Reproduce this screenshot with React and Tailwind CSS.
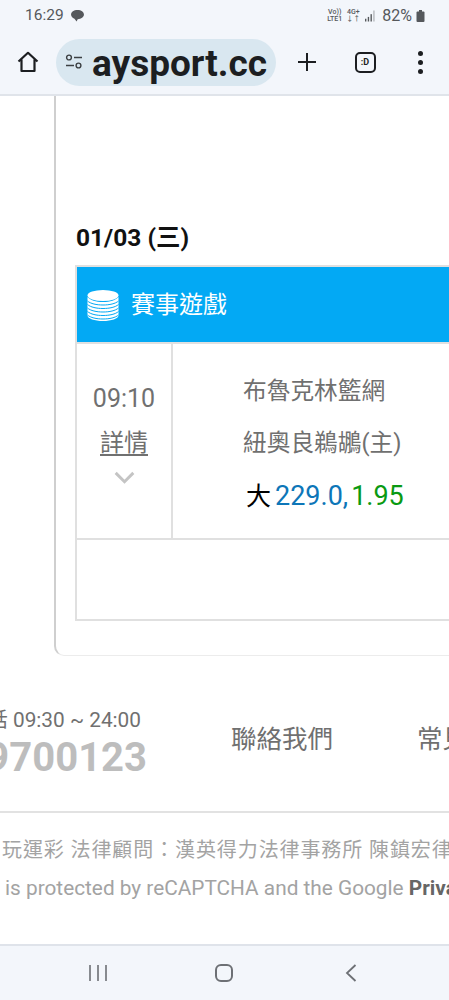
const CJK = { fontFamily: 'Roboto, "Noto Sans CJK TC", sans-serif' }

function HomeIcon() {
  return (
    <svg viewBox="0 0 24 24" fill="none" stroke="#1c1e21" strokeWidth="2.2" strokeLinejoin="round" className="w-[24px] h-[24px]">
      <path d="M2.5 11.5 12 2.8l9.5 8.7M5.5 9.5V21h13V9.500" />
    </svg>
  )
}

function TuneIcon() {
  return (
    <svg viewBox="0 0 18 16" fill="none" stroke="#3c4043" strokeWidth="1.4" className="w-[18px] h-[16px]">
      <circle cx="4" cy="3.5" r="2.4" />
      <path d="M9 3.5h8M1 11.5h8" />
      <circle cx="13.5" cy="11.5" r="2.4" />
    </svg>
  )
}

function CoinsIcon() {
  return (
    <svg viewBox="0 0 32 32" className="w-[32px] h-[32px]">
      <ellipse cx="16" cy="6.5" rx="15.5" ry="5.5" fill="#fff" />
      <path d="M.5 8v18.5C.5 29.5 7.5 32 16 32s15.500-2.500 15.500-5.500V8C29 11 23 13 16 13S3 11 .5 8z" fill="#fff" />
      <g fill="none" stroke="#03a9f4" strokeWidth="1">
        <path d="M.5 12c3 2.700 9 4 15.500 4s12.500-1.300 15.500-4" />
        <path d="M.5 15.500c3 2.700 9 4 15.500 4s12.500-1.300 15.500-4" />
        <path d="M.5 19c3 2.700 9 4 15.500 4s12.500-1.300 15.500-4" />
        <path d="M.5 22.500c3 2.700 9 4 15.500 4s12.500-1.300 15.500-4" />
        <path d="M.5 26c3 2.700 9 4 15.500 4s12.500-1.300 15.500-4" />
      </g>
    </svg>
  )
}

function StatusBar() {
  return (
    <div className="h-[30px] flex items-center pl-[25px] pr-[24px] pt-[1px] text-[#55585c]">
      <span className="text-[15.5px]">16:29</span>
      <svg viewBox="0 0 14 13" className="w-[13px] h-[12px] ml-[7px]" fill="#55585c">
        <path d="M7 0C3 0 0 2.200 0 5c0 2 1.500 3.600 3.700 4.400L6 12.500l1.200-2.500C11 10 14 7.800 14 5S11 0 7 0z" />
      </svg>
      <div className="ml-auto flex items-center">
        <div className="text-[7px] leading-[7px] font-medium text-center">
          <div>Vo))</div>
          <div>LTE1</div>
        </div>
        <div className="text-[7px] leading-[7px] font-medium text-center ml-[4px]">
          <div>4G+</div>
          <div>↓↑</div>
        </div>
        <svg viewBox="0 0 12 12" className="w-[11px] h-[12px] ml-[5px]" fill="#55585c">
          <rect x="0" y="9" width="1.500" height="3" />
          <rect x="3" y="7" width="1.500" height="5" />
          <rect x="6" y="4" width="1.500" height="8" />
          <rect x="9" y="0" width="1.500" height="12" fill="#b5b8bc" />
        </svg>
        <span className="text-[16px] ml-[6px]">82%</span>
        <svg viewBox="0 0 8 12" className="w-[9px] h-[12px] ml-[4px]" fill="#55585c">
          <rect x="2.500" y="0" width="3" height="2" />
          <rect x="0" y="1.500" width="8" height="10.500" rx="1" />
        </svg>
      </div>
    </div>
  )
}

function Toolbar() {
  return (
    <div className="h-[65px] flex items-center pb-[1px]">
      <div className="w-[56px] flex justify-center"><HomeIcon /></div>
      <div className="w-[220px] h-[47px] rounded-full bg-[#d9e7f0] flex items-center pl-[9px] overflow-hidden">
        <TuneIcon />
        <span className="text-[37px] font-bold text-[#1c1e21] ml-[9px] pt-[2px] leading-none whitespace-nowrap">aysport.cc</span>
      </div>
      <div className="w-[62px] flex justify-center">
        <svg viewBox="0 0 20 20" className="w-[20px] h-[20px]" stroke="#1c1e21" strokeWidth="2">
          <path d="M10 1v18M1 10h18" />
        </svg>
      </div>
      <div className="w-[56px] flex justify-center pr-[2px]">
        <div className="w-[21px] h-[21px] rounded-[5px] border-2 border-[#1c1e21] flex items-center justify-center text-[9px] font-bold text-[#1c1e21] leading-none">:D</div>
      </div>
      <div className="flex-1 flex flex-col items-center gap-[4px] pr-[2px]">
        <div className="w-[5px] h-[5px] rounded-full bg-[#1c1e21]" />
        <div className="w-[5px] h-[5px] rounded-full bg-[#1c1e21]" />
        <div className="w-[5px] h-[5px] rounded-full bg-[#1c1e21]" />
      </div>
    </div>
  )
}

function GameTable() {
  return (
    <div className="w-[420px] border-2 border-[#e0e0e0]">
      <div className="h-[75px] bg-[#03a9f4] flex items-center pl-[10px] text-white">
        <CoinsIcon />
        <span className="text-[24px] ml-[12px] leading-none">賽事遊戲</span>
      </div>
      <div className="flex h-[196px] border-t-2 border-[#e0e0e0]">
        <div className="w-[96px] border-r-2 border-[#e0e0e0] flex flex-col items-center pt-[40px] text-[#707070]">
          <div className="text-[25px] leading-[30px]">09:10</div>
          <div className="text-[24px] leading-[28px] underline underline-offset-[3px] mt-[15px]">詳情</div>
          <svg viewBox="0 0 22 14" fill="none" stroke="#c4c4c4" strokeWidth="3.200" className="w-[21px] h-[13px] mt-[14px]">
            <path d="M1.500 2 11 11.500 20.500 2" />
          </svg>
        </div>
        <div className="flex-1 pl-[70px] pt-[31px] text-[#707070]">
          <div className="text-[23.7px] leading-[32px]">布魯克林籃網</div>
          <div className="text-[23.7px] leading-[32px] mt-[20px]">紐奧良鵜鶘(主)</div>
          <div className="text-[27px] leading-[32px] mt-[21px] pl-[3px] whitespace-nowrap flex items-baseline">
            <span className="text-black text-[25px]">大</span>
            <span className="text-[#0d76b8] ml-[4px]">229.0,</span>
            <span className="text-[#0a9a12] ml-[3px]">1.95</span>
          </div>
        </div>
      </div>
      <div className="h-[81px] border-t-2 border-[#e0e0e0]" />
    </div>
  )
}

function Footer() {
  return (
    <div>
      <div className="h-[157px] border-b-2 border-[#e2e2e2] flex pt-[51px]">
        <div className="w-[147px] flex flex-col items-end shrink-0">
          <div className="text-[20.8px] leading-[26px] text-[#707070] whitespace-nowrap mr-[6px]">話 09:30 ~ 24:00</div>
          <div className="text-[40px] leading-[46px] font-bold text-[#bdbdbd] whitespace-nowrap mt-[2px]">9700123</div>
        </div>
        <div className="text-[25.5px] leading-[36px] text-[#707070] ml-[84px] mt-[14px] whitespace-nowrap">聯絡我們</div>
        <div className="text-[25.5px] leading-[36px] text-[#707070] ml-[84px] mt-[14px] whitespace-nowrap">常見問題</div>
      </div>
      <div className="pt-[23px] text-[#a3a3a3] whitespace-nowrap">
        <div className="text-[20px] leading-[28px] tracking-[0.9px] pl-[2px]">玩運彩 法律顧問：漢英得力法律事務所 陳鎮宏律師</div>
        <div className="text-[20.8px] leading-[28px] mt-[10px] pl-[5px]">
          is protected by reCAPTCHA and the Google <b className="text-[#666666]">Privacy Policy</b>
        </div>
      </div>
    </div>
  )
}

function NavBar() {
  return (
    <div className="h-[56px] bg-[#f3f6fb] border-t-2 border-[#dfe3ea] flex items-center">
      <div className="w-[98px] pl-[89px] shrink-0 flex">
        <svg viewBox="0 0 18 18" className="w-[18px] h-[18px] shrink-0" stroke="#6d7075" strokeWidth="1.600">
          <path d="M1 1v16M9 1v16M17 1v16" />
        </svg>
      </div>
      <div className="w-[18px] h-[18px] ml-[117px] rounded-[6px] border-2 border-[#6d7075]" />
      <svg viewBox="0 0 12 18" fill="none" stroke="#6d7075" strokeWidth="1.800" className="w-[12px] h-[18px] ml-[112px]">
        <path d="M10.500 1 2 9l8.500 8" />
      </svg>
    </div>
  )
}

export default function App() {
  return (
    <div className="w-[449px] h-[1000px] overflow-hidden flex flex-col bg-white" style={CJK}>
      <div className="h-[96px] shrink-0 bg-[#f3f6fb] border-b-2 border-[#e0e4ea]">
        <StatusBar />
        <Toolbar />
      </div>
      <div className="flex-1 overflow-hidden">
        <div className="ml-[54px] w-[460px] h-[560px] border-l-2 border-b-[1px] border-[#ececec] border-l-[#cfcfcf] rounded-bl-[10px] pl-[19px] pt-[126px]">
          <div className="text-[24.5px] leading-[32px] font-bold text-[#111111] pl-[1px]">01/03 (三)</div>
          <div className="mt-[11px]">
            <GameTable />
          </div>
        </div>
        <Footer />
      </div>
      <NavBar />
    </div>
  )
}
